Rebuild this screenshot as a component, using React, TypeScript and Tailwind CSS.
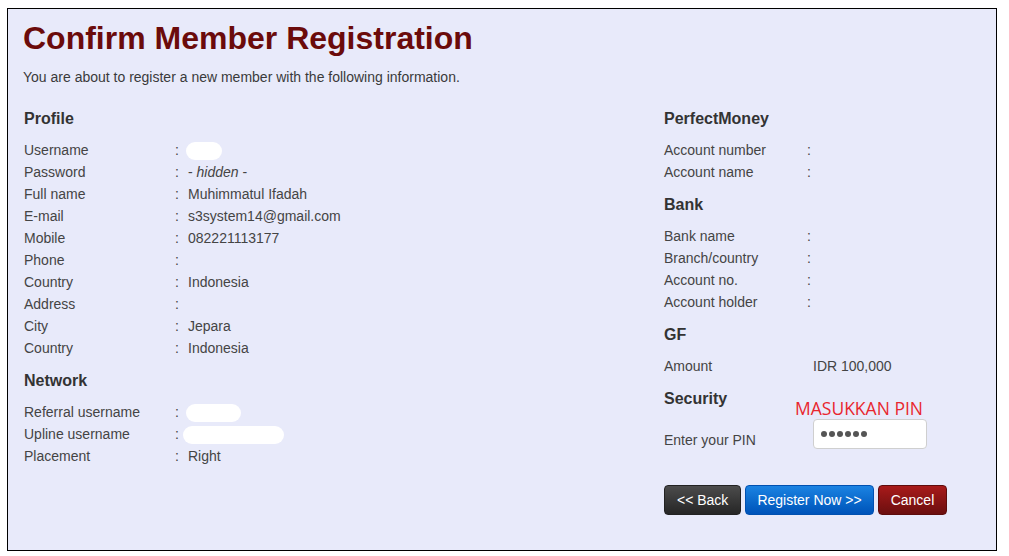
type Row = { label: string; value?: React.ReactNode; colon?: boolean }

const blob = (w: string, ml: string) => (
  <span className={`inline-block h-[18px] rounded-[9px] bg-white align-middle ${w} ${ml}`} />
)

const profileRows: Row[] = [
  { label: "Username", value: blob("w-[36px]", "-ml-[2px]") },
  {
    label: "Password",
    value: (
      <>
        - <i>hidden</i> -
      </>
    ),
  },
  { label: "Full name", value: "Muhimmatul Ifadah" },
  { label: "E-mail", value: "s3system14@gmail.com" },
  { label: "Mobile", value: "082221113177" },
  { label: "Phone" },
  { label: "Country", value: "Indonesia" },
  { label: "Address" },
  { label: "City", value: "Jepara" },
  { label: "Country", value: "Indonesia" },
]

const networkRows: Row[] = [
  { label: "Referral username", value: blob("w-[55px]", "-ml-[2px]") },
  { label: "Upline username", value: blob("w-[101px]", "-ml-[5px]") },
  { label: "Placement", value: "Right" },
]

function Heading({ children, first }: { children: React.ReactNode; first?: boolean }) {
  return (
    <h2
      className={`pt-[1px] text-[16px] font-bold leading-[21px] text-[#333] ${first ? "" : "mt-[10px]"} mb-[10px]`}
    >
      {children}
    </h2>
  )
}

function LeftRow({ label, value }: Row) {
  return (
    <div className="flex h-[22px] items-center leading-[22px]">
      <span className="w-[151px]">{label}</span>
      <span className="w-[13px]">:</span>
      <span>{value}</span>
    </div>
  )
}

function RightRow({ label, value, colon = true }: Row) {
  return (
    <div className="flex h-[22px] items-center leading-[22px]">
      <span className="w-[143px]">{label}</span>
      <span className="w-[6px]">{colon ? ":" : ""}</span>
      <span>{value}</span>
    </div>
  )
}

export default function App() {
  return (
    <div className="h-[556px] bg-white pl-[7px] pt-[8px] font-['Liberation_Sans',Arial,sans-serif] text-[14px] text-[#444]">
      <div className="h-[543px] w-[990px] border border-black bg-[#e8eafa] px-[15px] pt-[9px]">
        <h1 className="text-[32px] font-bold leading-[40px] text-[#6b0b0b]">Confirm Member Registration</h1>
        <p className="mt-[9px] leading-[20px] text-[#3a3a3a]">
          You are about to register a new member with the following information.
        </p>

        <div className="mt-[20px] grid grid-cols-[640px_1fr] pl-[1px]">
          {/* left column */}
          <div>
            <Heading first>Profile</Heading>
            {profileRows.map((r, i) => (
              <LeftRow key={i} {...r} />
            ))}
            <Heading>Network</Heading>
            {networkRows.map((r, i) => (
              <LeftRow key={i} {...r} />
            ))}
          </div>

          {/* right column */}
          <div>
            <Heading first>PerfectMoney</Heading>
            <RightRow label="Account number" />
            <RightRow label="Account name" />
            <Heading>Bank</Heading>
            <RightRow label="Bank name" />
            <RightRow label="Branch/country" />
            <RightRow label="Account no." />
            <RightRow label="Account holder" />
            <Heading>GF</Heading>
            <RightRow label="Amount" value="IDR 100,000" colon={false} />
            <div className="relative">
              <Heading>Security</Heading>
              <span className="absolute left-[131px] top-[10px] font-['Open_Sans',sans-serif] text-[17.5px] leading-[22px] text-[#e8262e]">
                MASUKKAN PIN
              </span>
            </div>
            <div className="flex items-start">
              <span className="mt-[10px] w-[149px] leading-[22px]">Enter your PIN</span>
              <div className="flex h-[30px] w-[114px] items-center gap-[2px] rounded-[4px] border border-[#cfcfcf] bg-white pl-[7px]">
                {[0, 1, 2, 3, 4, 5].map((d) => (
                  <span key={d} className="h-[6px] w-[6px] rounded-full bg-[#555]" />
                ))}
              </div>
            </div>
            <div className="mt-[34px] flex gap-[4px]">
              <button className="h-[30px] rounded-[4px] border border-[#222] bg-gradient-to-b from-[#4c4c4c] to-[#262626] px-3 text-white">
                &lt;&lt; Back
              </button>
              <button className="h-[30px] rounded-[4px] border border-[#0050b0] bg-gradient-to-b from-[#1b83e2] to-[#0053b9] px-[11px] text-white">
                Register Now &gt;&gt;
              </button>
              <button className="h-[30px] rounded-[4px] border border-[#5e0c0c] bg-gradient-to-b from-[#a81a1a] to-[#6c0f0f] px-3 text-white">
                Cancel
              </button>
            </div>
          </div>
        </div>
      </div>
    </div>
  )
}
